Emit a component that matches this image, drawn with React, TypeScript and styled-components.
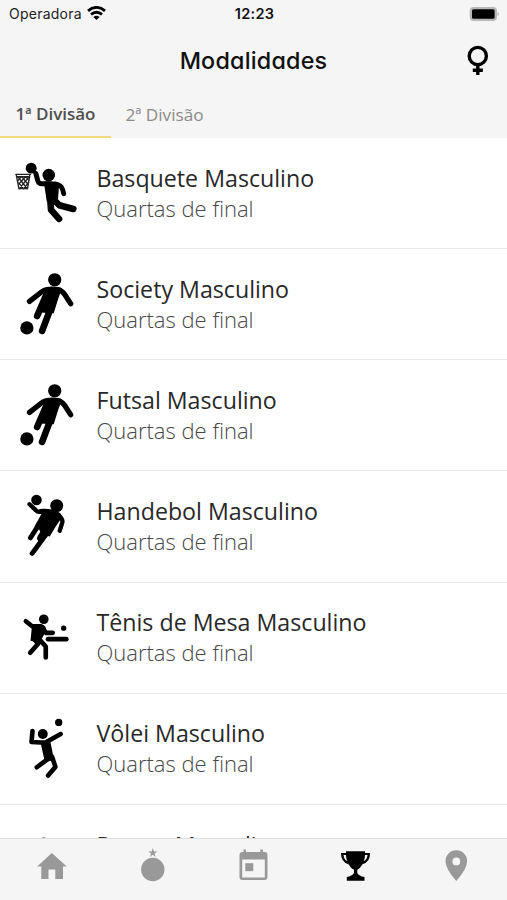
import React from "react";
import styled, { createGlobalStyle } from "styled-components";

const Global = createGlobalStyle`
  *, *::before, *::after { box-sizing: border-box; }
  body { margin: 0; background: #fff; }
`;

const Screen = styled.div`
  width: 507px;
  height: 900px;
  display: flex;
  flex-direction: column;
  overflow: hidden;
  background: #fff;
  font-family: "Open Sans", sans-serif;
`;

const StatusBar = styled.div`
  flex: none;
  height: 28px;
  padding: 0 7px 0 9px;
  display: grid;
  grid-template-columns: 1fr auto 1fr;
  align-items: center;
  background: #f5f5f5;
  font-family: Inter, sans-serif;
  color: #222;
  line-height: 28px;
`;

const Carrier = styled.div`
  display: flex;
  align-items: center;
  gap: 5px;
  font-size: 14px;
  letter-spacing: 0.23px;
`;

const WifiIcon = styled.svg`
  margin-top: -2px;
`;

const Clock = styled.div`
  font-size: 14.5px;
  font-weight: 600;
  color: #111;
  letter-spacing: 0.3px;
`;

const Battery = styled.svg`
  justify-self: end;
  margin-top: -1px;
`;

const Header = styled.header`
  flex: none;
  height: 64px;
  padding: 0 17px;
  display: grid;
  grid-template-columns: 24px 1fr 24px;
  align-items: center;
  background: #f5f5f5;
`;

const Title = styled.h1`
  grid-column: 2;
  margin: 0;
  padding-top: 2px;
  text-align: center;
  font: 450 23.3px/62px Inter, sans-serif;
  font-feature-settings: "cv11" 1;
  color: #111;
  letter-spacing: 0.22px;
`;

const Tabs = styled.nav`
  flex: none;
  height: 46px;
  display: flex;
  background: #f5f5f5;
`;

const Tab = styled.div<{ $active?: boolean }>`
  height: 46px;
  width: ${(p) => (p.$active ? "111px" : "107px")};
  text-align: center;
  font-size: ${(p) => (p.$active ? "17px" : "17.2px")};
  line-height: ${(p) => (p.$active ? "44px" : "46px")};
  font-weight: ${(p) => (p.$active ? 600 : 400)};
  color: ${(p) => (p.$active ? "#4f4f4f" : "#8b8b8b")};
  box-shadow: ${(p) => (p.$active ? "inset 0 -2px #f6d77c" : "none")};
`;

const List = styled.main`
  flex: 1;
  min-height: 0;
  overflow: hidden;
`;

const Row = styled.div`
  height: 111.17px;
  display: flex;
  border-bottom: 1.5px solid #e9e9e9;
`;

const Figure = styled.svg`
  flex: none;
  width: 96.5px;
  height: 111px;
`;

const Labels = styled.div`
  padding-top: 24.6px;
  white-space: nowrap;
`;

const Sport = styled.div`
  font-size: 23.2px;
  line-height: 31px;
  color: #282828;
`;

const Stage = styled.div`
  font-size: 22px;
  line-height: 29px;
  font-weight: 300;
  color: #484848;
`;

const BottomBar = styled.footer`
  flex: none;
  height: 62px;
  display: grid;
  grid-template-columns: repeat(5, 1fr);
  border-top: 1.5px solid #dcdcdc;
  background: #f5f5f5;
`;

const NavItem = styled.div<{ $active?: boolean }>`
  display: flex;
  justify-content: center;
  color: ${(p) => (p.$active ? "#000" : "#999")};
`;

const NavIcon = styled.svg`
  width: 40px;
  height: 60px;
`;

/* Figures share a 291 x 333 grid: three units per pixel of the row's icon cell. */
const line = { fill: "none", stroke: "#000", strokeLinecap: "round", strokeLinejoin: "round" } as const;

const Basketball = () => (
  <g transform="translate(0 36)">
    <circle cx="94" cy="54" r="16.5" />
    <circle cx="147" cy="75" r="19" />
    <path {...line} strokeWidth="15" d="M108 70l6 22q3 9 12 9h25M164 103q16 0 21 8 5 8 7 20" />
    <path d="M132 94h34q12 0 12 9l-3 46-34 6z" />
    <path {...line} strokeWidth="20" d="M151 140l3 40 24 27M157 144l22 22 42 11" />
    <g {...line} stroke="#222" strokeWidth="4">
      <path d="M48 73h44M52 80h38M49 74l8 42h26l7-42" />
      <path d="M54 80l28 36M66 80l19 24M78 80l9 11M88 80l-30 36M77 80l-20 22M64 80l-11 13M57 99l14 17M86 97l-14 19" />
    </g>
  </g>
);

const Soccer = () => (
  <g transform="translate(0 33)">
    <circle cx="165" cy="59" r="20" />
    <circle cx="81" cy="204" r="20" />
    <path {...line} strokeWidth="16" d="M141 90q-9 0-15 5l-37 29M174 90q13 0 21 13l18 28" />
    <path d="M132 84q6-5 24-5 24 0 31 6l-12 33-13 42-42-2 9-42z" />
    <path {...line} strokeWidth="20" d="M137 110l-25 58M163 118l-36 95" />
  </g>
);

const Handball = () => (
  <g transform="translate(0 25.5)">
    <circle cx="110" cy="61" r="16" />
    <circle cx="171" cy="78" r="19.5" />
    <path {...line} strokeWidth="13" d="M89 74l18 17q5 5 12 6h28M168 104q13 3 18 14 4 7 1 14l-7 22" />
    <path d="M107 100l13-12q40-3 62 13l5 12-19 28-18 30-23-6-11-18-12-6 21-38z" />
    <path {...line} strokeWidth="15" d="M124 125l-32 50M157 135q-10 22-24 38l-36 49" />
    <path {...line} strokeWidth="22" d="M146 137l-23 39" />
  </g>
);

const TableTennis = () => (
  <g transform="translate(0 35.5)">
    <circle cx="132" cy="73" r="14.5" />
    <circle cx="192" cy="100" r="8" />
    <path {...line} strokeWidth="14" d="M78 79l19 15h21q8 0 12 8l9 12h20" />
    <path d="M97 87h27q17 5 15 21l-13 24-7 12-27-6z" />
    <path {...line} strokeWidth="14" d="M101 130l14 17-24 27M114 129l24 26v33" />
    <path {...line} strokeWidth="14" d="M145 133h55" />
  </g>
);

const Volleyball = () => (
  <g transform="translate(0 34)">
    <circle cx="129" cy="86" r="15" />
    <circle cx="177" cy="51" r="11" />
    <path {...line} strokeWidth="14" d="M98 77l-3 33 41 2 47-26" />
    <path d="M121 106l30-1 5 24 7 36-24 4q-6-2-6-9z" />
    <path {...line} strokeWidth="14" d="M146 160l-35 26M157 154l10 31-22 26" />
  </g>
);

const Shuttlecock = () => <circle cx="132" cy="112" r="15" />;

const sports = [
  { name: "Basquete Masculino", stage: "Quartas de final", Art: Basketball },
  { name: "Society Masculino", stage: "Quartas de final", Art: Soccer },
  { name: "Futsal Masculino", stage: "Quartas de final", Art: Soccer },
  { name: "Handebol Masculino", stage: "Quartas de final", Art: Handball },
  { name: "Tênis de Mesa Masculino", stage: "Quartas de final", Art: TableTennis },
  { name: "Vôlei Masculino", stage: "Quartas de final", Art: Volleyball },
  { name: "Peteca Masculino", Art: Shuttlecock },
];

export default function App() {
  return (
    <>
      <Global />
      <Screen>
        <StatusBar>
          <Carrier>
            Operadora
            <WifiIcon width="19" height="15" viewBox="0 0 19 15" fill="none" stroke="#000" strokeWidth="2.8">
              <path d="M1 4.8Q9.5-2 18 4.8" />
              <path d="M4 8.4q5.5-4.4 11 0" />
              <path d="M6.4 11q3.1-2.3 6.2 0L9.5 14z" fill="#000" stroke="none" />
            </WifiIcon>
          </Carrier>
          <Clock>12:23</Clock>
          <Battery width="31" height="16" viewBox="0 0 31 16">
            <rect x=".7" y="1" width="27.3" height="14" rx="4" fill="#b8b8b8" />
            <rect x="3" y="3.3" width="22.6" height="9.4" rx="1.5" />
            <path d="M28.6 6q2.4 2 0 4.2z" fill="#aaa" />
          </Battery>
        </StatusBar>
        <Header>
          <Title>Modalidades</Title>
          <svg width="24" height="34" viewBox="0 0 24 34" fill="none" stroke="#000" strokeWidth="3.4">
            <circle cx="11.8" cy="13" r="8.6" />
            <path d="M11.8 21.5V32M6.8 27.3h10" />
          </svg>
        </Header>
        <Tabs>
          <Tab $active>1ª Divisão</Tab>
          <Tab>2ª Divisão</Tab>
        </Tabs>
        <List>
          {sports.map(({ name, stage, Art }) => (
            <Row key={name}>
              <Figure viewBox="0 0 291 333" preserveAspectRatio="xMinYMid meet">
                <Art />
              </Figure>
              <Labels>
                <Sport>{name}</Sport>
                {stage && <Stage>{stage}</Stage>}
              </Labels>
            </Row>
          ))}
        </List>
        <BottomBar>
          <NavItem>
            <NavIcon viewBox="0 0 40 60" fill="currentColor">
              <path d="M20.8 14L35.8 27.5H32V40H24.3V30.5H17.5V40H10.3V27.5H6.2z" />
            </NavIcon>
          </NavItem>
          <NavItem>
            <NavIcon viewBox="0 0 40 60" fill="currentColor">
              <circle cx="20.8" cy="30.5" r="11.7" />
              <path d="M20.8 9l1.1 3.4h3.5l-2.9 2.1 1.2 3.4-2.9-2.1-2.9 2.1 1.2-3.4-2.9-2.1h3.5z" />
            </NavIcon>
          </NavItem>
          <NavItem>
            <NavIcon viewBox="0 0 40 60" fill="currentColor">
              <path
                fillRule="evenodd"
                d="M10.5 10.5H13V13H27.3V10.5H30V13H31.5Q34.5 13 34.5 16V38Q34.5 41 31.5 41H9.5Q6.5 41 6.5 38V16Q6.5 13 9.5 13H10.5zM9.2 20.5V38.5H31.8V20.5z"
              />
              <path d="M12.3 24.2h8v8h-8z" />
            </NavIcon>
          </NavItem>
          <NavItem $active>
            <NavIcon viewBox="0 0 40 60" fill="currentColor">
              <path
                fillRule="evenodd"
                d="M11 12.3H30V14H35Q35.3 23 27.5 25.2Q25.5 29 22.3 30.7V34Q24 37 29.5 38V41.8H11.8V38Q17 37 19 34V30.7Q15.5 29 13.5 25.2Q5.8 23 6 14H11zM8.5 16Q9 21 12.2 22Q11 19 11 16zM32.5 16H30Q30 19 28.8 22Q32 21 32.5 16z"
              />
            </NavIcon>
          </NavItem>
          <NavItem>
            <NavIcon viewBox="0 0 40 60" fill="currentColor">
              <path fillRule="evenodd" d="M20.3 11.3A10.8 10.8 0 0 1 31.1 22.3Q31.1 30 20.3 42Q9.5 30 9.5 22.3A10.8 10.8 0 0 1 20.3 11.3zM20.3 18.5a3.9 3.9 0 1 0 0 7.8a3.9 3.9 0 1 0 0-7.8z" />
            </NavIcon>
          </NavItem>
        </BottomBar>
      </Screen>
    </>
  );
}
